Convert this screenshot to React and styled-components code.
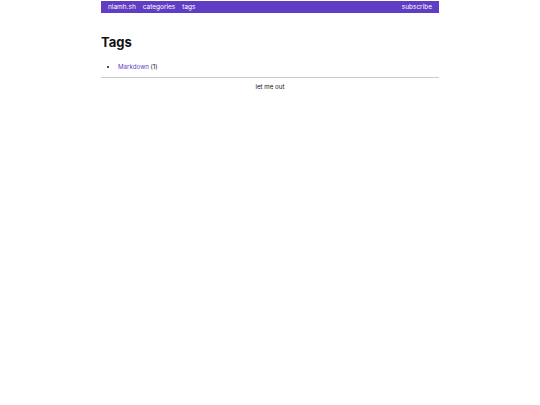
import styled, { createGlobalStyle } from "styled-components";

const GlobalStyle = createGlobalStyle`
  body {
    margin: 0;
    background: #fff;
    font-family: "Inter", "Noto Sans", sans-serif;
    color: #111;
  }
`;

export default function App() {
  return (
    <>
      <GlobalStyle />
      <StyledPage>
        <StyledNav>
          <StyledNavLinks>
            <StyledNavLink href="#">niamh.sh</StyledNavLink>
            <StyledNavLink href="#">categories</StyledNavLink>
            <StyledNavLink href="#">tags</StyledNavLink>
          </StyledNavLinks>
          <StyledNavLink href="#">subscribe</StyledNavLink>
        </StyledNav>
        <StyledMain>
          <StyledHeading>Tags</StyledHeading>
          <StyledList>
            <li>
              <StyledTagLink href="#">Markdown</StyledTagLink> (1)
            </li>
          </StyledList>
        </StyledMain>
        <StyledFooter>
          <span>let me out</span>
        </StyledFooter>
      </StyledPage>
    </>
  );
}

const StyledPage = styled.div`
  width: 338px;
  margin: 1px auto 0;
`;

const StyledNav = styled.nav`
  display: flex;
  justify-content: space-between;
  align-items: center;
  height: 12px;
  padding: 0 7px;
  background: #5f3dc4;
`;

const StyledNavLinks = styled.div`
  display: flex;
  gap: 7px;
`;

const StyledNavLink = styled.a`
  color: #fff;
  font-size: 6.5px;
  text-decoration: none;
  line-height: 12px;
`;

const StyledMain = styled.main`
  padding-top: 21px;
`;

const StyledHeading = styled.h1`
  margin: 0;
  font-size: 13px;
  font-weight: 700;
  line-height: 16px;
`;

const StyledList = styled.ul`
  margin: 12px 0 0;
  padding-left: 17px;
  font-size: 6.2px;
  line-height: 9px;
`;

const StyledTagLink = styled.a`
  color: #5f3dc4;
  text-decoration: none;
`;

const StyledFooter = styled.footer`
  margin-top: 6px;
  border-top: 1px solid #ccc;
  padding-top: 4px;
  text-align: center;
  font-size: 6.2px;
  line-height: 9px;
`;
